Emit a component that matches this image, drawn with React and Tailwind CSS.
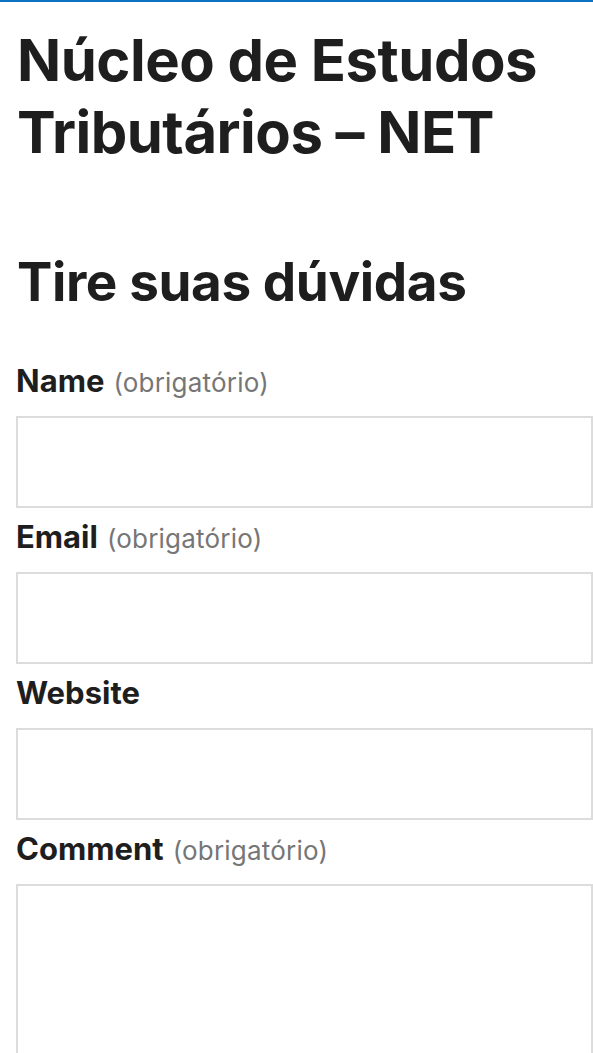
import React from "react";

const Field = ({ label, required, tall }) => (
  <div className="flex flex-col">
    <label className="h-[40px] text-[31px] font-bold leading-[40px] text-[#1e1e1e]">
      {label}
      {required && (
        <span className="ml-[9px] text-[26px] font-normal leading-none text-[#767676] tracking-[0.2px]">(obrigatório)</span>
      )}
    </label>
    <div
      className={
        "mt-[15px] border-2 border-[#dcdcdc] bg-white " + (tall ? "h-[260px]" : "h-[92px]")
      }
    />
  </div>
);

export default function App() {
  return (
    <div className="min-h-screen bg-white font-['Inter',sans-serif] text-[#1e1e1e]">
      <div className="h-[2px] bg-[#0a72c0]" />
      <div className="pl-4">
        <h1 className="mt-[22px] pl-[1px] text-[58px] font-bold leading-[72px] tracking-[-0.5px]">
          Núcleo de Estudos Tributários – NET
        </h1>
        <h2 className="mt-[78px] pl-[1px] text-[53px] font-bold leading-[72px] tracking-[-0.4px]">
          Tire suas dúvidas
        </h2>
        <div className="mt-[43px] flex flex-col gap-[9px]">
          <Field label="Name" required />
          <Field label="Email" required />
          <Field label="Website" />
          <Field label="Comment" required tall />
        </div>
      </div>
    </div>
  );
}
